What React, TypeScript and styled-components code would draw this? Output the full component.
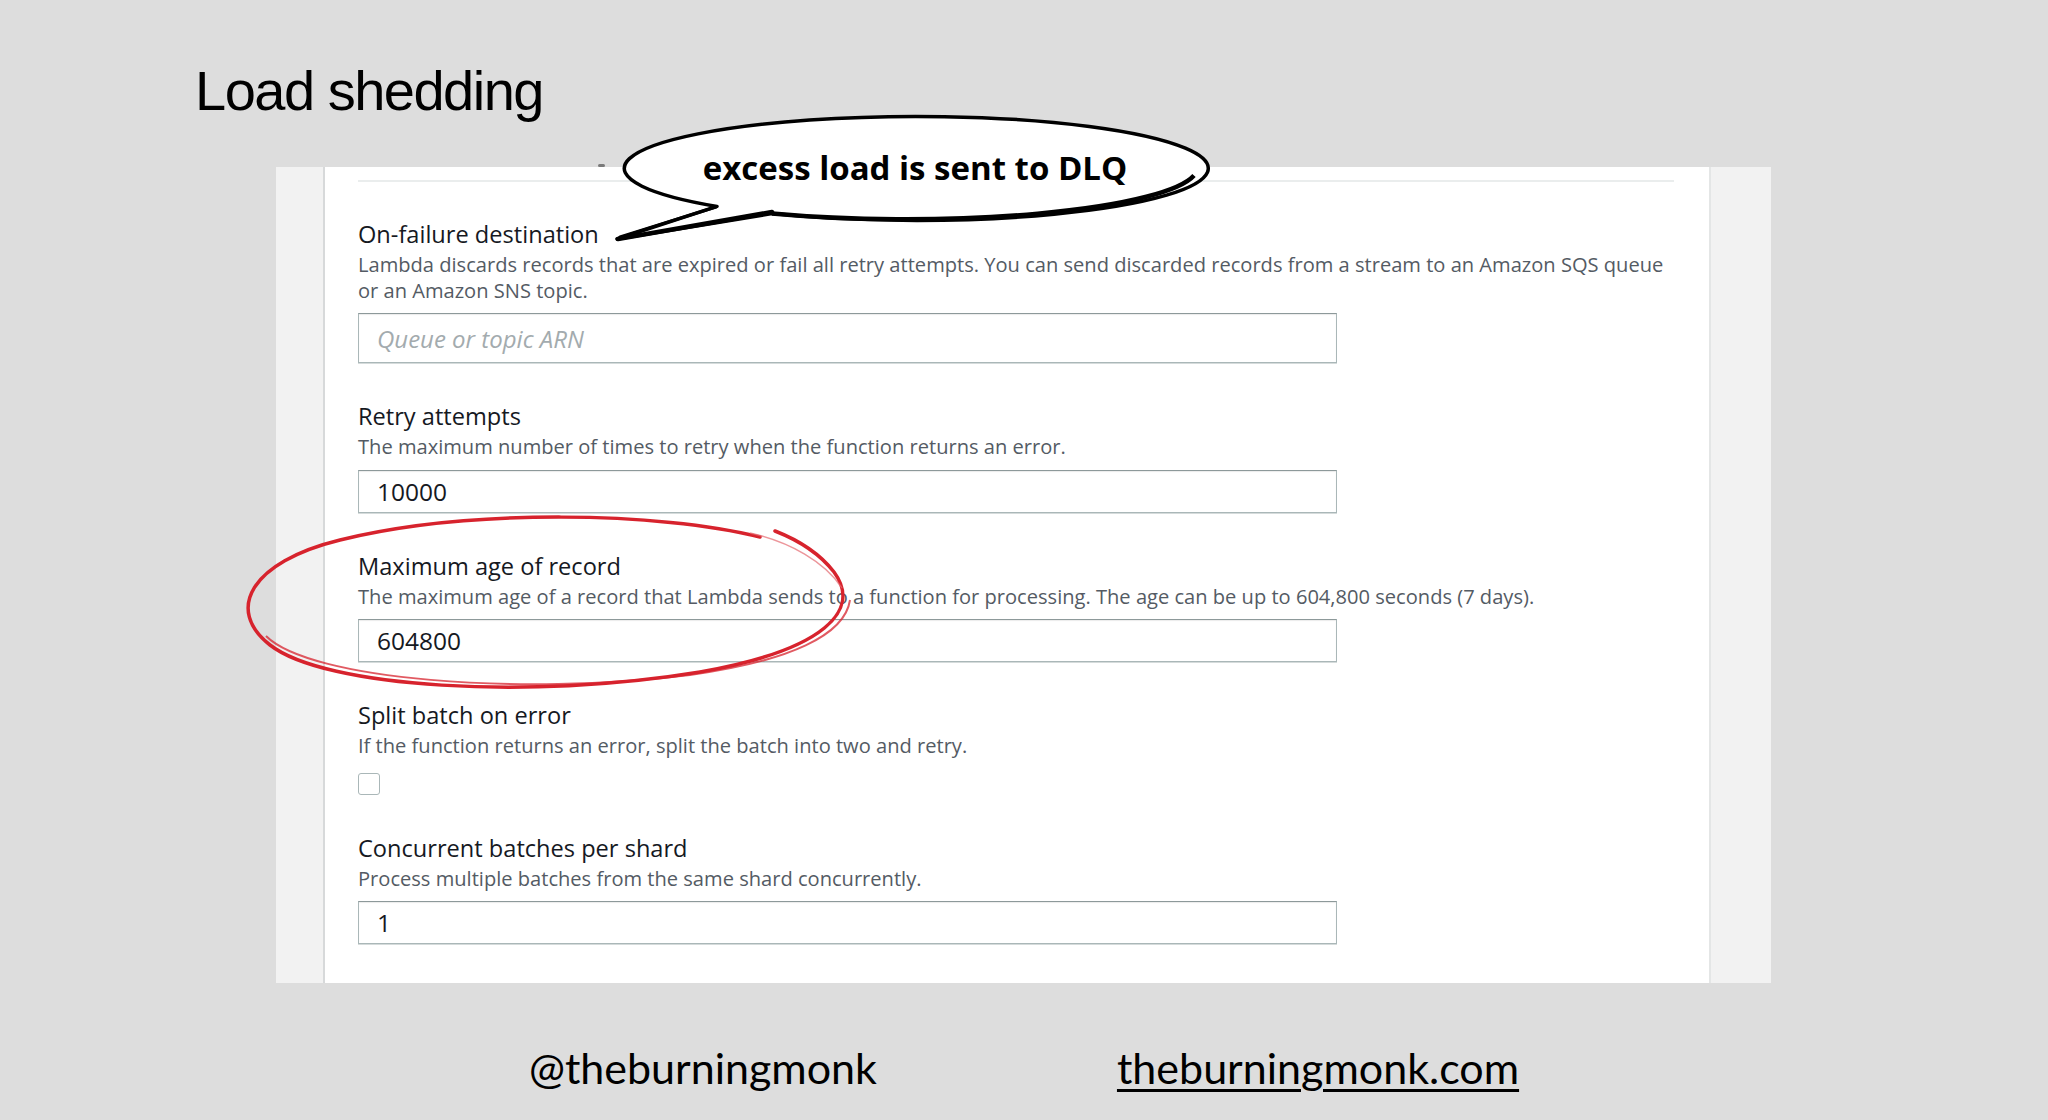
import styled, { createGlobalStyle } from "styled-components";

// form fields shown on the slide
interface Field {
  label: string;
  description: string[];
  kind: "input" | "checkbox";
  value?: string;
  placeholder?: string;
  tall?: boolean;
}

const fields: Field[] = [
  {
    label: "On-failure destination",
    description: [
      "Lambda discards records that are expired or fail all retry attempts. You can send discarded records from a stream to an Amazon SQS queue",
      "or an Amazon SNS topic.",
    ],
    kind: "input",
    placeholder: "Queue or topic ARN",
    tall: true,
  },
  {
    label: "Retry attempts",
    description: ["The maximum number of times to retry when the function returns an error."],
    kind: "input",
    value: "10000",
  },
  {
    label: "Maximum age of record",
    description: [
      "The maximum age of a record that Lambda sends to a function for processing. The age can be up to 604,800 seconds (7 days).",
    ],
    kind: "input",
    value: "604800",
  },
  {
    label: "Split batch on error",
    description: ["If the function returns an error, split the batch into two and retry."],
    kind: "checkbox",
  },
  {
    label: "Concurrent batches per shard",
    description: ["Process multiple batches from the same shard concurrently."],
    kind: "input",
    value: "1",
  },
];

export default function App() {
  return (
    <>
      <GlobalStyle />
      <Slide>
        <Title>Load shedding</Title>
        <Panel>
          <Sheet>
            <Separator />
            {fields.map((f) => (
              <FieldBlock key={f.label}>
                <Label>{f.label}</Label>
                <Description>
                  {f.description.map((line) => (
                    <Line key={line}>{line}</Line>
                  ))}
                </Description>
                {f.kind === "input" ? (
                  <InputBox $tall={f.tall}>
                    {f.value ? <Value>{f.value}</Value> : <Placeholder>{f.placeholder}</Placeholder>}
                  </InputBox>
                ) : (
                  <Checkbox />
                )}
              </FieldBlock>
            ))}
          </Sheet>
        </Panel>
        <Footer>
          <Handle>@theburningmonk</Handle>
          <Site>theburningmonk.com</Site>
        </Footer>

        {/* little mark peeking out at the top of the form */}
        <Tick />

        {/* speech bubble annotation */}
        <Bubble>
          <svg width="640" height="150" viewBox="0 0 640 150">
            <path
              d="M 178 113.6 A 292 52 0 1 0 123 106.4 L 23 139 Z"
              fill="#fff"
              stroke="#000"
              strokeWidth="3.5"
              strokeLinejoin="round"
            />
            <path d="M 178 113.6 A 292 52 0 0 0 600 75.5" fill="none" stroke="#000" strokeWidth="4.5" />
            <path d="M 24 139 L 178 112" stroke="#000" strokeWidth="4.5" strokeLinecap="round" />
            <path d="M 26 137 L 122 107" stroke="#000" strokeWidth="3" strokeLinecap="round" />
          </svg>
          <BubbleText>excess load is sent to DLQ</BubbleText>
        </Bubble>

        {/* hand drawn red circle */}
        <RedCircle width="650" height="210" viewBox="0 0 650 210">
          <path
            d="M 530 37 C 430 12 240 8 110 40 C 20 62 -5 110 40 145 C 95 188 300 200 470 172 C 595 150 632 110 604 72 C 590 54 568 40 545 31"
            fill="none"
            stroke="#d7232d"
            strokeWidth="3.5"
            strokeLinecap="round"
          />
          <path
            d="M 36 136 C 80 180 290 196 460 175 C 560 161 615 135 620 100"
            fill="none"
            stroke="#d7232d"
            strokeWidth="2"
            opacity="0.75"
          />
          <path d="M 520 33 C 560 42 595 62 612 88" fill="none" stroke="#e46a70" strokeWidth="1.5" opacity="0.7" />
        </RedCircle>
      </Slide>
    </>
  );
}

const GlobalStyle = createGlobalStyle`
  html, body {
    margin: 0;
    padding: 0;
    background: #dddddd;
  }
  body {
    font-family: "Open Sans", "Liberation Sans", sans-serif;
  }
`;

const Slide = styled.div`
  position: relative;
  width: 2048px;
  height: 1120px;
  display: flex;
  flex-direction: column;
  background: #dddddd;
  overflow: hidden;
`;

const Title = styled.h1`
  margin: 60px 0 0 195px;
  font-family: "Liberation Sans", Arial, sans-serif;
  font-weight: 400;
  font-size: 56px;
  letter-spacing: -1.5px;
  line-height: 62px;
  height: 62px;
  color: #000;
`;

const Panel = styled.div`
  margin: 45px 0 0 276px;
  width: 1495px;
  height: 816px;
  box-sizing: border-box;
  display: flex;
  padding: 0 60px 0 47px;
  background: #f2f2f2;
`;

const Sheet = styled.div`
  flex: 1;
  background: #fff;
  border-left: 2px solid #d7d9da;
  border-right: 2px solid #e4e6e6;
  padding: 13px 35px 0 33px;
`;

const Separator = styled.div`
  height: 2px;
  background: #eaeded;
  margin-bottom: 37px;
`;

const FieldBlock = styled.div`
  & + & {
    margin-top: 38px;
  }
`;

const Label = styled.div`
  font-size: 23.6px;
  line-height: 30px;
  color: #16191f;
  margin-bottom: 3px;
`;

const Description = styled.div`
  font-size: 20.1px;
  line-height: 25.5px;
  color: #545b64;
  margin-bottom: 10px;
`;

const Line = styled.div`
  white-space: nowrap;
`;

const InputBox = styled.div<{ $tall?: boolean }>`
  width: 979px;
  height: ${(p) => (p.$tall ? 50 : 43)}px;
  box-sizing: border-box;
  display: flex;
  align-items: center;
  padding-left: 18px;
  background: #fff;
  border: 1px solid #aab7b8;
  border-top-color: #8d999a;
  box-shadow: inset 0 1px 1px rgba(0, 0, 0, 0.08), 0 1px 0 #d5dbdb;
`;

const Value = styled.span`
  font-size: 24.5px;
  color: #16191f;
`;

const Placeholder = styled.span`
  font-size: 24px;
  font-style: italic;
  color: #a3abae;
`;

const Checkbox = styled.div`
  margin-top: 14px;
  width: 22px;
  height: 22px;
  box-sizing: border-box;
  border: 1.5px solid #aab7b8;
  border-radius: 3px;
  background: #fff;
`;

const Footer = styled.div`
  margin-top: 60px;
  display: flex;
  justify-content: center;
  gap: 240px;
  font-family: Lato, "Open Sans", sans-serif;
  font-size: 43px;
  line-height: 50px;
  color: #000;
`;

const Handle = styled.span``;

const Site = styled.span`
  text-decoration: underline;
  text-decoration-thickness: 3px;
  text-underline-offset: 5px;
`;

const Tick = styled.span`
  position: absolute;
  left: 598px;
  top: 164px;
  width: 7px;
  height: 3px;
  border-radius: 2px;
  background: #7a7a7a;
`;

const Bubble = styled.div`
  position: absolute;
  left: 594px;
  top: 100px;
  width: 640px;
  height: 150px;
`;

const BubbleText = styled.div`
  position: absolute;
  left: 9px;
  top: 0;
  width: 624px;
  height: 134px;
  display: flex;
  align-items: center;
  justify-content: center;
  font-family: "Open Sans", sans-serif;
  font-weight: 700;
  font-size: 33px;
  color: #000;
`;

const RedCircle = styled.svg`
  position: absolute;
  left: 230px;
  top: 500px;
`;
